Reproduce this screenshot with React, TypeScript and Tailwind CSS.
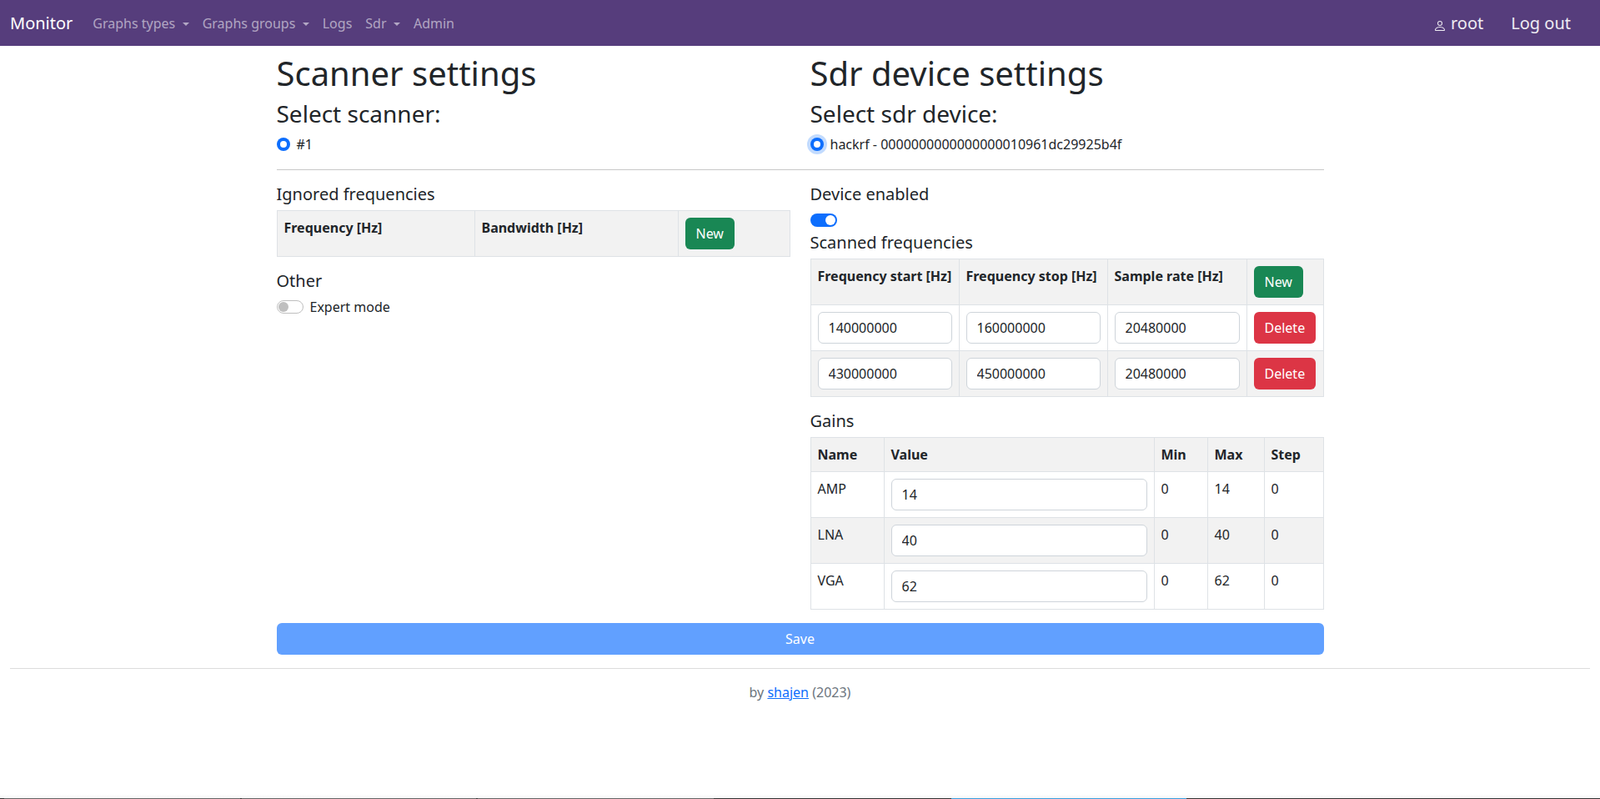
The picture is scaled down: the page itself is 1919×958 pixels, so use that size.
const font = 'font-["Noto_Sans",sans-serif]';
const cell = 'border border-[#dee2e6] px-2 py-2 align-top text-left';
const head = `${cell} font-bold whitespace-nowrap`;
const stripe = 'bg-[#f2f2f2]';
const inputClass =
  'block h-[38px] w-full rounded-md border border-[#ced4da] bg-white px-3 text-base text-[#212529] outline-none';
const btnClass = 'h-[38px] rounded-md px-[13px] text-base font-normal text-white';

function Caret() {
  return <span className="ml-[8.4px] inline-block border-x-[4.8px] border-t-[4.8px] border-x-transparent border-t-current align-[3px]" />;
}

function NavLink({ label, caret }: { label: string; caret?: boolean }) {
  return (
    <a className="px-2 text-[#ffffff8c] whitespace-nowrap">
      {label}
      {caret && <Caret />}
    </a>
  );
}

function Radio({ focused }: { focused?: boolean }) {
  return (
    <span
      className={
        'inline-flex h-4 w-4 shrink-0 items-center justify-center rounded-full bg-[#0d6efd]' +
        (focused ? ' shadow-[0_0_0_4px_rgba(13,110,253,0.25)]' : '')
      }
    >
      <span className="h-2 w-2 rounded-full bg-white" />
    </span>
  );
}

function PersonIcon() {
  return (
    <svg width="16" height="16" viewBox="0 0 16 16" fill="currentColor" className="mr-[5px] mt-[6px]">
      <path d="M8 8a3 3 0 1 0 0-6 3 3 0 0 0 0 6zm2-3a2 2 0 1 1-4 0 2 2 0 0 1 4 0zm4 8c0 1-1 1-1 1H3s-1 0-1-1 1-4 6-4 6 3 6 4zm-1-.004c-.001-.246-.154-.986-.832-1.664C11.516 10.68 10.289 10 8 10c-2.29 0-3.516.68-4.168 1.332-.678.678-.83 1.418-.832 1.664h10z" />
    </svg>
  );
}

function Input({ value }: { value: string }) {
  return <input className={inputClass} defaultValue={value} />;
}

const scanned = [
  ['140000000', '160000000', '20480000'],
  ['430000000', '450000000', '20480000'],
];

const gains = [
  ['AMP', '14', '0', '14', '0'],
  ['LNA', '40', '0', '40', '0'],
  ['VGA', '62', '0', '62', '0'],
];

export default function App() {
  return (
    <div className={`${font} flex h-[958px] flex-col overflow-hidden bg-white text-base leading-6 text-[#212529]`}>
      <nav className="flex h-[55px] shrink-0 items-center bg-[#563d7c] pl-3 pr-[35px]">
        <a className="mr-4 text-xl text-white">Monitor</a>
        <div className="flex">
          <NavLink label="Graphs types" caret />
          <NavLink label="Graphs groups" caret />
          <NavLink label="Logs" />
          <NavLink label="Sdr" caret />
          <NavLink label="Admin" />
        </div>
        <div className="ml-auto flex items-center text-xl text-white/90">
          <span className="flex items-center">
            <PersonIcon />
            root
          </span>
          <span className="ml-[33px]">Log out</span>
        </div>
      </nav>

      <main className="mx-auto w-[1256px]">
        <div className="grid grid-cols-2 gap-x-6">
          <div>
            <h1 className="mt-[9px] text-[40px] leading-[48px]">Scanner settings</h1>
            <h3 className="mt-[7px] text-[28px] leading-[34px]">Select scanner:</h3>
            <label className="mt-2 flex items-center gap-2">
              <Radio />
              #1
            </label>
          </div>
          <div>
            <h1 className="mt-[9px] text-[40px] leading-[48px]">Sdr device settings</h1>
            <h3 className="mt-[7px] text-[28px] leading-[34px]">Select sdr device:</h3>
            <label className="mt-2 flex items-center gap-2">
              <Radio focused />
              hackrf - 0000000000000000010961dc29925b4f
            </label>
          </div>
        </div>

        <hr className="mt-[18px] border-t border-[#c8c8c8]" />

        <div className="mt-[17px] grid grid-cols-2 gap-x-6">
          <div>
            <h5 className="text-xl leading-6">Ignored frequencies</h5>
            <table className="mt-[7px] w-full table-fixed border-collapse">
              <thead>
                <tr className={stripe}>
                  <th className={`${head} w-[237px]`}>Frequency [Hz]</th>
                  <th className={`${head} w-[244px]`}>Bandwidth [Hz]</th>
                  <th className={cell}>
                    <button className={`${btnClass} bg-[#198754]`}>New</button>
                  </th>
                </tr>
              </thead>
            </table>
            <h5 className="mt-[17px] text-xl leading-6">Other</h5>
            <label className="mt-[7px] flex items-center gap-2">
              <span className="flex h-4 w-8 items-center rounded-full border border-[#bfbfbf] bg-white pl-px">
                <span className="h-[12px] w-[12px] rounded-full bg-[#bfbfbf]" />
              </span>
              Expert mode
            </label>
          </div>

          <div>
            <h5 className="text-xl leading-6">Device enabled</h5>
            <span className="mt-[11px] flex h-4 w-8 items-center justify-end rounded-full bg-[#0d6efd] pr-[2px]">
              <span className="h-[12px] w-[12px] rounded-full bg-white" />
            </span>
            <h5 className="mt-[7px] text-xl leading-6">Scanned frequencies</h5>
            <table className="mt-[7px] w-full table-fixed border-collapse">
              <thead>
                <tr className={stripe}>
                  <th className={`${head} w-[178px]`}>Frequency start [Hz]</th>
                  <th className={`${head} w-[178px]`}>Frequency stop [Hz]</th>
                  <th className={`${head} w-[167px]`}>Sample rate [Hz]</th>
                  <th className={cell}>
                    <button className={`${btnClass} bg-[#198754]`}>New</button>
                  </th>
                </tr>
              </thead>
              <tbody>
                {scanned.map((row, i) => (
                  <tr key={i} className={i % 2 === 1 ? stripe : ''}>
                    {row.map((v, j) => (
                      <td key={j} className={cell}>
                        <Input value={v} />
                      </td>
                    ))}
                    <td className={cell}>
                      <button className={`${btnClass} bg-[#dc3545]`}>Delete</button>
                    </td>
                  </tr>
                ))}
              </tbody>
            </table>

            <h5 className="mt-[17px] text-xl leading-6">Gains</h5>
            <table className="mt-[7px] w-full table-fixed border-collapse">
              <thead>
                <tr className={stripe}>
                  <th className={`${head} w-[88px]`}>Name</th>
                  <th className={head}>Value</th>
                  <th className={`${head} w-[64px]`}>Min</th>
                  <th className={`${head} w-[68px]`}>Max</th>
                  <th className={`${head} w-[71px]`}>Step</th>
                </tr>
              </thead>
              <tbody>
                {gains.map((g, i) => (
                  <tr key={g[0]} className={i % 2 === 1 ? stripe : ''}>
                    <td className={cell}>{g[0]}</td>
                    <td className={cell}>
                      <Input value={g[1]} />
                    </td>
                    <td className={cell}>{g[2]}</td>
                    <td className={cell}>{g[3]}</td>
                    <td className={cell}>{g[4]}</td>
                  </tr>
                ))}
              </tbody>
            </table>
          </div>
        </div>

        <button className="mt-4 block h-[38px] w-full rounded-md bg-[#61a0ff] text-white">Save</button>
      </main>

      <footer className="mx-3 mt-4 border-t border-[#dcdcdc] pt-4 text-center text-[#6c757d]">
        by <a className="text-[#0d6efd] underline">shajen</a> (2023)
      </footer>

      {/* desktop taskbar peeking in at the very bottom of the capture */}
      <div className="mt-auto h-[5px] shrink-0 bg-linear-to-b from-white to-[#f6f6f6]" />
      <div className="flex h-px shrink-0 bg-[#333333]">
        <span className="ml-[5px] w-[283px] bg-[#666666]" />
        <span className="ml-[2px] w-[281px] bg-[#666666]" />
        <span className="ml-[2px] w-[283px] bg-[#666666]" />
        <span className="ml-[285px] w-[282px] bg-[#3aa0e0]" />
      </div>
    </div>
  );
}
